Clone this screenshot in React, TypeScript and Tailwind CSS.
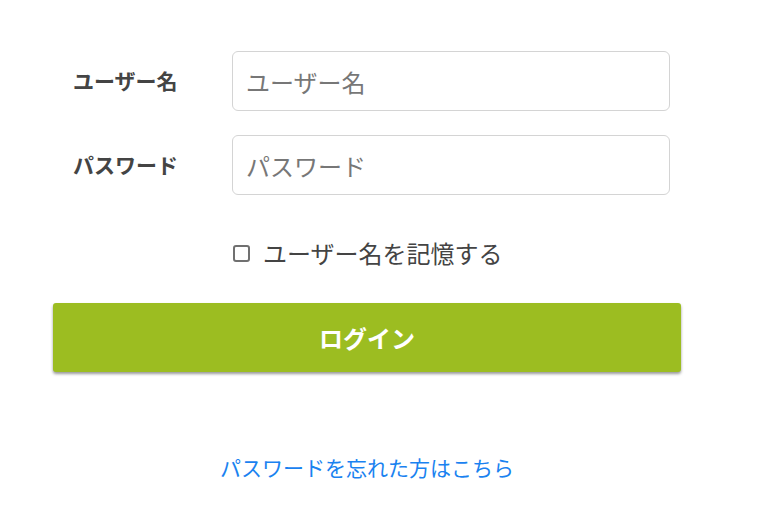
const font = { fontFamily: '"Noto Sans CJK JP", "Noto Sans", sans-serif' };

export default function App() {
  return (
    <div className="min-h-[517px] w-[762px] bg-white" style={font}>
      <div className="w-[628px] ml-[53px] pt-[51px]">
        {/* Form rows */}
        <div className="flex flex-col gap-6">
          <div className="flex items-center">
            <label className="w-[179px] pl-5 text-[21px] font-bold text-[#444]">ユーザー名</label>
            <input
              type="text"
              placeholder="ユーザー名"
              className="w-[438px] h-[60px] rounded-md border border-[#d4d4d4] px-[13px] text-[24px] text-[#333] placeholder:text-[#777] outline-none"
            />
          </div>
          <div className="flex items-center">
            <label className="w-[179px] pl-5 text-[21px] font-bold text-[#444]">パスワード</label>
            <input
              type="password"
              placeholder="パスワード"
              className="w-[438px] h-[60px] rounded-md border border-[#d4d4d4] px-[13px] text-[24px] text-[#333] placeholder:text-[#777] outline-none"
            />
          </div>
        </div>

        {/* Remember me */}
        <label className="flex items-center gap-[13px] ml-[180px] mt-[40px] h-[36px] text-[24px] text-[#444]">
          <span className="w-[17px] h-[17px] rounded-[3px] border-2 border-[#707070] bg-white" />
          ユーザー名を記憶する
        </label>

        {/* Login button */}
        <button className="mt-[32px] w-[628px] h-[69px] rounded-[3px] bg-[#9cbd21] text-white text-[24px] font-bold shadow-[0_2px_3px_rgba(0,0,0,0.4)]">
          ログイン
        </button>

        {/* Forgot password */}
        <div className="mt-[80px] text-center">
          <a href="#" className="text-[21px] text-[#1a82f0]">パスワードを忘れた方はこちら</a>
        </div>
      </div>
    </div>
  );
}
